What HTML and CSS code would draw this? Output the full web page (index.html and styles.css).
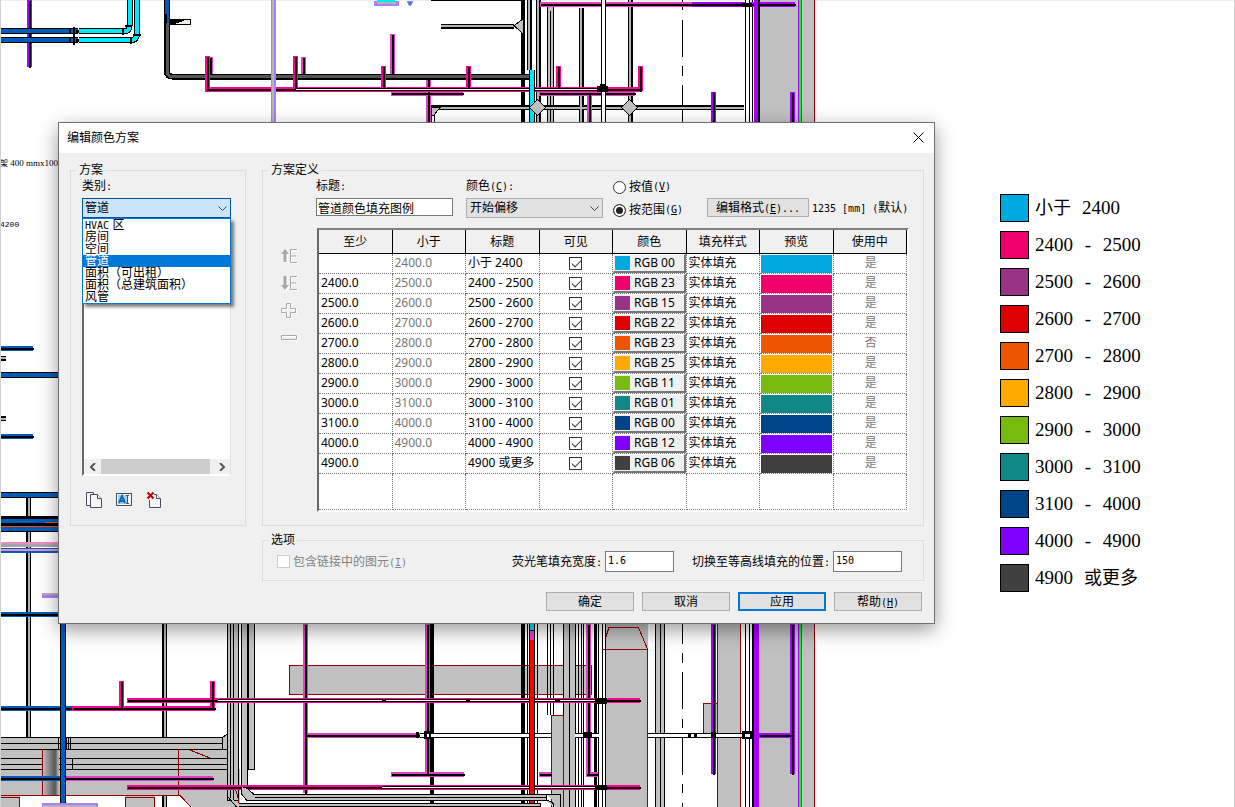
FILE: index.html
```html
<!DOCTYPE html>
<html lang="zh-CN">
<head>
<meta charset="utf-8">
<title>编辑颜色方案</title>
<link rel="stylesheet" href="styles.css">
</head>
<body>
<main class="canvas">
<svg class="drawing" viewBox="0 0 1235 807" width="1235" height="807" aria-hidden="true">
  <defs>
    <linearGradient id="round" x1="0" x2="1" y1="0" y2="0"><stop offset="0" stop-color="#bbb"/><stop offset=".75" stop-color="#555"/><stop offset="1" stop-color="#bbb"/></linearGradient>
    <path id="blueThick" d="M0 31H78M0 40H78M167 0V23M0 374.500H58M0 495H58M63 624V804"/>
    <path id="cyan" d="M79 31H125Q129.500 31 129.500 26V0M79 40H131Q137 40 137 34V0"/>
    <path id="gray" d="M167 23V71Q167 76.500 172 76.500H530"/>
    <path id="blueThin" d="M0 348.500H33M0 436.500H33M0 614.500H58M0 708.500H72M0 778.500H66"/>
    <path id="magenta" d="M207.500 56V89.500H640M295.500 56V89M383.500 66V88M468.500 66V88M558.500 66V88M640.500 66V91M121.500 681V708M212.500 681V708M72 708.500H215M127 700.500H640M127 787.500H640"/>
    <path id="pink" d="M210.500 57V74M303.500 57V74M392.500 34V74M391 93.500H463M539 93.500H635M428.500 79V123M589.500 93V123M540 4.500H692M305.500 624V793M306 735.500H420M391 774.500H464M539 774.500H551M586 774.500H600M66 778.500H213M427.500 624V774M588.500 624V774"/>
    <path id="violet" d="M29.500 0V67M692 4.500H795M713.500 92V123M792.500 92V123M713.500 624V774M792.500 624V774M759 735.500H793"/>
    <path id="tubeFine" d="M296 89H602M218 700.500H598M382 787.500H600"/>
    <path id="tubeWhite" d="M603.500 0V123M747.500 0V123M648 735.500H745M420 735.500H551M575 735.500H600M747.500 624V807M600.500 624V807"/>
    <path id="tubeGray" d="M581 8V123M630 0V123M28.500 498V737M164.500 624V737M164.500 796V807M431 107.500H744M441 26H514M0 358H6M0 418.500H6M538 0V123M529 0V70"/>
  </defs>

  <!-- structural members -->
  <path class="steel" d="M759 0H814V123H759ZM759 624H814V807H759ZM605 624H648V807H605ZM717 624H741V807H717ZM703 703H717V735H703ZM0 749H229L240 770V807H190L180 795H0ZM0 795H20V807H0ZM125 796H155V807H125Z"/>
  <path class="steel lined" d="M547.500 7V130H553.500V7M550.500 11V130M227.500 620V800H238.500V620M230.500 620V800M233.500 620V800M241.500 620V787H247.500V620M248.500 620V769.500H254.500V620M655.500 620V810H664.500V620M660.500 620V810"/>
  <path class="steel lined" d="M-1 737.500H222.500V749.500H-1M-1 743.500H222.500M222.500 737.500L227 734V749.500H222.500M-1 758.500H227M-1 769.500H227M-1 764.500H227M58.500 737V749M66.500 737V749M68.500 737V749M70.500 737V749M72.500 758V769"/>
  <rect class="round" x="43" y="750" width="16" height="46"/>
  <path class="rim" d="M42.500 749V796M60.500 749V796M178.500 749V795M0 795.500H180L191 807M190 750L210 758M19.500 797V807M125.500 807V797H154.500V807M0 797.500H19M235 789Q240 798 238 807"/>
  <path class="steel rimmed" d="M289.500 665.500H591V694.500H289.500Z"/>
  <path class="steel lined" d="M563.500 620V810H575.500V620M569.500 620V810M578.500 620V810M581.500 620V810M583.500 620V810M547.500 620V715M550.500 620V715M553.500 620V715"/>
  <path class="steel rimmed" d="M551.500 715.500H563V807H551.500ZM703.500 735V703.500H717"/>
  <path class="rim" d="M814.500 0V123M814.500 624V807M717.500 624V807M740.500 624V807M647.500 807V649.500H599M647.500 649L638.500 627.500H609L605.500 638"/>
  <path class="solid" d="M521 0H525V123H521ZM521 624H525V807H521ZM430 624H434V803H430ZM594 624H597V807H594Z"/>
  <path class="hair" d="M431 0.500H525M431.500 123V107M434.500 123V109M682.500 0V10M682.500 20V57M682.500 66V76M682.500 85V123M682.500 624V644M682.500 653V663M682.500 672V709M682.500 719V728M682.500 737V775M682.500 784V793M682.500 803V807M527.500 624V807M537.500 624V807M605.500 624V807M752.500 0V123M752.500 624V807"/>

  <!-- pipe runs -->
  <use href="#tubeGray" class="w5 black"/><use href="#tubeGray" class="w2 silver"/>
  <use href="#violet" class="w5 violet"/><use href="#violet" x=".5" y=".5" class="w2 black"/>
  <use href="#pink" class="w5 pink"/><use href="#pink" x=".5" y=".5" class="w2 black"/>
  <use href="#blueThin" class="w5 blue"/><use href="#blueThin" x=".5" y=".5" class="w2 black"/>
  <use href="#gray" class="w6 black"/><use href="#gray" class="w3 slate"/>
  <use href="#magenta" class="w5 magenta"/><use href="#magenta" x=".5" y=".5" class="w2 black"/>
  <use href="#tubeFine" class="w3 black"/><use href="#tubeFine" class="w1 white"/>
  <use href="#tubeWhite" class="w5 black"/><use href="#tubeWhite" class="w3 white"/>
  <use href="#cyan" class="w6 black"/><use href="#cyan" class="w4 cyan"/>

  <path class="w5 steelblue" d="M0 544.500H58"/><path class="w5 blue" d="M0 550.500H58"/><path class="w2 rose" d="M0 550H58M0 543H58"/>
  <path class="w16 black" d="M0 524H58"/><path class="w12 orange" d="M0 525H58"/><path class="w4 blue" d="M0 521H58M0 529H58"/><path class="w3 black" d="M0 524.500H58"/><path class="w1 orange" d="M45 522.500H58"/>
  <use href="#blueThick" class="w6 black"/><use href="#blueThick" class="w4 blue"/>

  <path class="w5 lavender" d="M273.500 0V123M42 595H58M42 805.500H98M374 3H399"/><path class="w2 silver" d="M273 0V123M43 594H58M43 806H96M377 3H396"/>
  <path class="w2 cyan" d="M377 1H395"/><path fill="#1e8ce6" stroke="#a582f5" d="M407 1H413L411 5H409Z"/>
  <path class="w5 violet" d="M756 0V123M756 624V807"/><path class="w2 black" d="M759 0V123M753 624V807"/>
  <path class="w4 violet" d="M800 0V123M800 624V807"/><path class="w2 green" d="M800 0V123M800 624V807"/>
  <path class="w6 black" d="M532 70V123M532 624V807"/><path class="w4 cyan" d="M532 70V123M532 624V630"/>
  <path class="w4 red" d="M532 640V807"/><path class="w4 pink" d="M532 631V640"/>
  <path class="steel lined" d="M514 25.500L523 19V34ZM529.500 107.500L537.500 99.500L545.500 107.500L537.500 115.500ZM621.500 107.500L629.500 99.500L637.500 107.500L629.500 115.500ZM431.500 107.500H440L434 115H431.500Z"/>

  <!-- pipework along the bottom edge -->
  <path class="steel lined" d="M241.500 787V794L247 800.500H546V794.500H254L248 789M255 797.500H546M228 797L239 810H540V803.500H239M239 806.500H540M546.500 794.500H560.500V807M546 800.500Q554 801 554 807"/>

  <!-- joints -->
  <path class="hair" fill="#f0f0e8" d="M170.500 19.500H190.500V24.500H170.500Z"/><path class="solid" d="M170 19H188L178 23L170 25Z"/>
  <path class="solid" d="M73 27H75V45H73ZM125 25H132V27H125ZM133 34H141V36H133ZM122 28H124V35H122ZM130 37H132V44H130ZM69 29H71V33H69ZM76 30H79V33H76ZM69 38H71V42H69ZM76 39H79V42H76ZM164 14H167V23H164ZM597 86H608V92H597ZM600 84H606V89H600ZM742 3H752V7H742ZM424 731H431V739H424ZM595 698H607V704H595ZM595 785H607V790H595ZM583 732H592V738H583ZM711 732H716V738H711ZM688 733H697V737H688ZM742 731H752V739H742ZM416 732H419V738H416ZM382 699H386V702H382ZM466 699H470V702H466ZM555 699H560V702H555Z"/>
  <path class="w3 white" d="M745 735.500H750M427 735.500H429M691 735.500H694"/>
</svg>

<p class="note note-tray"><span lang="zh">架</span> 400 mmx100</p>
<p class="note note-level">4200</p>

<ul class="legend">
  <li><i class="c1"></i><span><span class="cjk">小于</span><span class="num">2400</span></span></li>
  <li><i class="c2"></i><span>2400 <span class="dash">-</span> 2500</span></li>
  <li><i class="c3"></i><span>2500 <span class="dash">-</span> 2600</span></li>
  <li><i class="c4"></i><span>2600 <span class="dash">-</span> 2700</span></li>
  <li><i class="c5"></i><span>2700 <span class="dash">-</span> 2800</span></li>
  <li><i class="c6"></i><span>2800 <span class="dash">-</span> 2900</span></li>
  <li><i class="c7"></i><span>2900 <span class="dash">-</span> 3000</span></li>
  <li><i class="c8"></i><span>3000 <span class="dash">-</span> 3100</span></li>
  <li><i class="c9"></i><span>3100 <span class="dash">-</span> 4000</span></li>
  <li><i class="c10"></i><span>4000 <span class="dash">-</span> 4900</span></li>
  <li><i class="c11"></i><span>4900<span class="cjk after">或更多</span></span></li>
</ul>

<section class="dialog" role="dialog" aria-labelledby="dialog-title">
  <header class="titlebar">
    <h1 id="dialog-title">编辑颜色方案</h1>
    <button class="close" type="button" aria-label="关闭"><svg width="11" height="11" viewBox="0 0 11 11"><path d="M.5.500l10 10M10.500.500l-10 10"/></svg></button>
  </header>
  <form class="body">
    <fieldset class="scheme">
      <legend>方案</legend>
      <label for="category">类别<span class="mono">:</span></label>
      <div class="picker">
        <select id="category" class="open"><option>管道</option></select>
        <svg class="caret" width="9" height="6" viewBox="0 0 9 6"><path d="M.5.500l4 4 4-4"/></svg>
        <ul class="menu" role="listbox" aria-label="类别">
          <li role="option"><span class="mono">HVAC</span> 区</li>
          <li role="option">房间</li>
          <li role="option">空间</li>
          <li role="option" aria-selected="true">管道</li>
          <li role="option">面积（可出租）</li>
          <li role="option">面积（总建筑面积）</li>
          <li role="option">风管</li>
        </ul>
      </div>
      <div class="tree">
        <div class="hscroll">
          <button type="button" aria-label="向左"><svg width="6" height="8" viewBox="0 0 6 8"><path d="M5 0L1 4l4 4"/></svg></button>
          <div class="thumb"></div>
          <button type="button" aria-label="向右"><svg width="6" height="8" viewBox="0 0 6 8"><path d="M1 0l4 4-4 4"/></svg></button>
        </div>
      </div>
      <div class="tools">
        <button type="button" aria-label="复制"><svg width="18" height="18" viewBox="0 0 18 18"><path class="page" d="M1.500 1.500h7v2h-3v11h-4z"/><path class="page" d="M5.500 3.500h7l4 4v9h-11z"/><path class="page" d="M12.500 3.500v4h4"/></svg></button>
        <button type="button" aria-label="重命名"><svg width="18" height="18" viewBox="0 0 18 18"><rect class="page" x="1.500" y="2.500" width="15" height="12"/><path fill="#9bd0f0" d="M3 4h9v9H3z"/><path class="letter" d="M4 12l3-7 3 7M5 10h4"/><path class="page" d="M11 4.500h3M11 12.500h3M12.500 4v9"/></svg></button>
        <button type="button" aria-label="删除"><svg width="18" height="18" viewBox="0 0 18 18"><path class="page" d="M4.500 3.500h7l4 4v9h-11z"/><path class="page" d="M11.500 3.500v4h4"/><path fill="#f0f0f0" d="M1 1h8v8H1z"/><path class="cross" d="M2.500 1.500l6 6M8.500 1.500l-6 6"/></svg></button>
      </div>
    </fieldset>

    <fieldset class="definition">
      <legend>方案定义</legend>
      <div class="controls">
        <div class="field"><label for="title">标题<span class="mono">:</span></label><input id="title" type="text" value="管道颜色填充图例"></div>
        <div class="field"><label for="colour">颜色<span class="mono">(<u>C</u>):</span></label>
          <div class="picker"><select id="colour"><option>开始偏移</option></select><svg class="caret" width="9" height="6" viewBox="0 0 9 6"><path d="M.5.500l4 4 4-4"/></svg></div></div>
        <div class="radios">
          <label><input type="radio" name="by">按值<span class="mono">(<u>V</u>)</span></label>
          <label><input type="radio" name="by" checked>按范围<span class="mono">(<u>G</u>)</span></label>
        </div>
        <div class="format"><button class="btn" type="button">编辑格式<span class="mono">(<u>E</u>)...</span></button><span><span class="mono">1235 [mm] (</span>默认<span class="mono">)</span></span></div>
      </div>
      <div class="grid-area">
        <div class="order">
          <button type="button" aria-label="上移"><svg width="18" height="18" viewBox="0 0 18 18"><path class="fat" d="M5 15V5"/><path class="head" d="M5 2l4 5H1z"/><path d="M17 2.500h-6.500v13H17M10.500 9H16"/></svg></button>
          <button type="button" aria-label="下移"><svg width="18" height="18" viewBox="0 0 18 18"><path class="fat" d="M5 2v10"/><path class="head" d="M5 16l4-5H1z"/><path d="M17 2.500h-6.500v13H17M10.500 9H16"/></svg></button>
          <button type="button" aria-label="添加"><svg width="18" height="18" viewBox="0 0 18 18"><path d="M6.500 2.500h4v5h5v4h-5v5h-4v-5h-5v-4h5z"/></svg></button>
          <button type="button" aria-label="删除行"><svg width="18" height="18" viewBox="0 0 18 18"><path d="M1.500 7.500h15v4h-15z"/></svg></button>
        </div>
        <div class="table-frame">
        <table>
          <thead><tr><th>至少</th><th>小于</th><th>标题</th><th>可见</th><th>颜色</th><th>填充样式</th><th>预览</th><th>使用中</th></tr></thead>
          <tbody>
            <tr><td></td><td>2400.0</td><td>小于 2400</td><td><input type="checkbox" checked aria-label="可见"></td><td><button type="button"><i class="c1"></i>RGB 00</button></td><td>实体填充</td><td><i class="c1"></i></td><td>是</td></tr>
            <tr><td>2400.0</td><td>2500.0</td><td>2400 - 2500</td><td><input type="checkbox" checked aria-label="可见"></td><td><button type="button"><i class="c2"></i>RGB 23</button></td><td>实体填充</td><td><i class="c2"></i></td><td>是</td></tr>
            <tr><td>2500.0</td><td>2600.0</td><td>2500 - 2600</td><td><input type="checkbox" checked aria-label="可见"></td><td><button type="button"><i class="c3"></i>RGB 15</button></td><td>实体填充</td><td><i class="c3"></i></td><td>是</td></tr>
            <tr><td>2600.0</td><td>2700.0</td><td>2600 - 2700</td><td><input type="checkbox" checked aria-label="可见"></td><td><button type="button"><i class="c4"></i>RGB 22</button></td><td>实体填充</td><td><i class="c4"></i></td><td>是</td></tr>
            <tr><td>2700.0</td><td>2800.0</td><td>2700 - 2800</td><td><input type="checkbox" checked aria-label="可见"></td><td><button type="button"><i class="c5"></i>RGB 23</button></td><td>实体填充</td><td><i class="c5"></i></td><td>否</td></tr>
            <tr><td>2800.0</td><td>2900.0</td><td>2800 - 2900</td><td><input type="checkbox" checked aria-label="可见"></td><td><button type="button"><i class="c6"></i>RGB 25</button></td><td>实体填充</td><td><i class="c6"></i></td><td>是</td></tr>
            <tr><td>2900.0</td><td>3000.0</td><td>2900 - 3000</td><td><input type="checkbox" checked aria-label="可见"></td><td><button type="button"><i class="c7"></i>RGB 11</button></td><td>实体填充</td><td><i class="c7"></i></td><td>是</td></tr>
            <tr><td>3000.0</td><td>3100.0</td><td>3000 - 3100</td><td><input type="checkbox" checked aria-label="可见"></td><td><button type="button"><i class="c8"></i>RGB 01</button></td><td>实体填充</td><td><i class="c8"></i></td><td>是</td></tr>
            <tr><td>3100.0</td><td>4000.0</td><td>3100 - 4000</td><td><input type="checkbox" checked aria-label="可见"></td><td><button type="button"><i class="c9"></i>RGB 00</button></td><td>实体填充</td><td><i class="c9"></i></td><td>是</td></tr>
            <tr><td>4000.0</td><td>4900.0</td><td>4000 - 4900</td><td><input type="checkbox" checked aria-label="可见"></td><td><button type="button"><i class="c10"></i>RGB 12</button></td><td>实体填充</td><td><i class="c10"></i></td><td>是</td></tr>
            <tr><td>4900.0</td><td></td><td>4900 或更多</td><td><input type="checkbox" checked aria-label="可见"></td><td><button type="button"><i class="c11"></i>RGB 06</button></td><td>实体填充</td><td><i class="c11"></i></td><td>是</td></tr>
            <tr class="blank"><td></td><td></td><td></td><td></td><td></td><td></td><td></td><td></td></tr>
          </tbody>
        </table>
        </div>
      </div>
    </fieldset>

    <fieldset class="options">
      <legend>选项</legend>
      <div class="option-row">
        <label class="linked"><input type="checkbox" disabled><span>包含链接中的图元<span class="mono">(<u>I</u>)</span></span></label>
        <label for="width">荧光笔填充宽度<span class="mono">:</span></label><input id="width" type="text" value="1.6">
        <label class="second" for="contour">切换至等高线填充的位置<span class="mono">:</span></label><input id="contour" type="text" value="150">
      </div>
    </fieldset>

    <div class="actions">
      <button class="btn" type="button">确定</button>
      <button class="btn" type="button">取消</button>
      <button class="btn primary" type="button">应用</button>
      <button class="btn" type="button">帮助<span class="mono">(<u>H</u>)</span></button>
    </div>
  </form>
</section>
</main>
</body>
</html>
```
FILE: styles.css
```css
* { box-sizing: border-box; }
body { margin: 0; background: #fff; color: #000; font: 12px/14px "Liberation Sans", "Noto Sans CJK SC", sans-serif; }
ul, p, h1 { margin: 0; padding: 0; list-style: none; }
button, input, select { font: inherit; color: inherit; margin: 0; padding: 0; }
button { border: 0; background: none; }
i { display: block; }
.mono { font-family: "DejaVu Sans Mono", monospace; font-size: 10px; line-height: 12px; }

.canvas { position: relative; min-height: 100vh; overflow: hidden; border: solid #d0d0d0; border-width: 0 1px 0 1px; box-shadow: inset 0 1px #eee; }

/* drawing */
.drawing { position: absolute; left: -1px; top: 0; shape-rendering: crispEdges; fill: none; }
.steel { fill: #c0c0c0; }
.lined { stroke: #000; }
.rim { stroke: #960000; }
.rimmed { stroke: #960000; }
.round { fill: url(#round); }
.solid { fill: #000; }
.hair { stroke: #000; }
.w1 { stroke-width: 1; } .w2 { stroke-width: 2; } .w3 { stroke-width: 3; } .w4 { stroke-width: 4; }
.w5 { stroke-width: 5; } .w6 { stroke-width: 6; } .w12 { stroke-width: 12; } .w16 { stroke-width: 16; }
.black { stroke: #000; } .white { stroke: #fff; } .silver { stroke: #b4b4b4; }
.blue { stroke: #005cb9; } .steelblue { stroke: #a5a5ad; } .cyan { stroke: #00eaff; }
.slate { stroke: #555; } .magenta { stroke: #ff0090; } .pink { stroke: #e340c6; }
.violet { stroke: #a800ff; } .lavender { stroke: #a582f5; } .rose { stroke: #f08cc0; }
.orange { stroke: #ff4800; } .red { stroke: #f00; } .green { stroke: #0f0; }

.note { position: absolute; left: -1px; white-space: nowrap; }
.note-tray { top: 158px; font: 9px/10px "Liberation Serif", "Noto Sans CJK SC", serif; }
.note-tray span { font-size: 8px; }
.note-level { top: 220px; font: 8px/10px "Liberation Mono", monospace; }

.legend { position: absolute; left: 999px; top: 194px; display: grid; gap: 9px; font: 19px/28px "Liberation Serif", "Noto Sans CJK SC", serif; }
.legend li { display: flex; gap: 6px; height: 28px; white-space: nowrap; }
.legend i { width: 29px; height: 28px; border: 1px solid #000; }
.legend .dash { padding: 0 7px; }
.legend .cjk { font-size: 18px; }
.legend .num, .legend .after { margin-left: 11px; }

.c1 { background: #00a9e0; } .c2 { background: #f0006b; } .c3 { background: #993388; }
.c4 { background: #dd0000; } .c5 { background: #ee5500; } .c6 { background: #ffaa00; }
.c7 { background: #77bb11; } .c8 { background: #118888; } .c9 { background: #004488; }
.c10 { background: #8000ff; } .c11 { background: #404040; }

/* dialog */
.dialog { position: absolute; left: 57px; top: 122px; width: 877px; border: 1px solid #707070; background: #f0f0f0; box-shadow: 0 6px 18px rgba(0, 0, 0, .4); }
.titlebar { display: flex; align-items: center; justify-content: space-between; height: 30px; padding: 0 9px 0 8px; background: #fff; }
.titlebar h1 { font-size: 12px; font-weight: 400; }
.close { display: flex; padding: 0 1px 2px; }
.close svg { fill: none; stroke: #000; }
.body { display: grid; grid-template-columns: 176px 1fr; column-gap: 16px; row-gap: 7px; padding: 10px 10px 12px 11px; }
fieldset { min-width: 0; margin: 0; padding: 0; border: 1px solid #dcdcdc; }
legend { margin-left: 6px; padding: 0 2px; line-height: 14px; }
label { white-space: nowrap; }

.scheme { display: flex; flex-direction: column; height: 363px; }
.scheme > label { height: 21px; padding: 2px 0 0 11px; }
.scheme .picker { margin: 0 14px 0 11px; }
.picker { position: relative; }
select { display: block; width: 100%; height: 20px; padding: 0 3px; border: 1px solid #adadad; border-radius: 0; background: #e1e1e1; appearance: none; }
select.open { border-color: #005499; background: #cce4f7; padding: 0 2px; }
.caret { position: absolute; right: 4px; top: 8px; fill: none; stroke: #444; }
.menu { position: absolute; z-index: 1; left: 0; right: 0; top: 20px; border: 1px solid #0078d7; background: #fff; box-shadow: 3px 3px 3px rgba(0, 0, 0, .5); }
.menu li { height: 12px; padding-left: 2px; line-height: 12px; white-space: nowrap; }
.menu [aria-selected] { background: #0078d7; color: #fff; }
.tree { display: flex; flex-direction: column; justify-content: flex-end; height: 258px; margin: 0 14px 0 11px; border: 2px solid; border-color: #a0a0a0 #e3e3e3 #fff #696969; border-right-width: 1px; background: #fff; }
.hscroll { display: flex; height: 15px; background: #f0f0f0; }
.hscroll button { display: flex; align-items: center; justify-content: center; width: 17px; }
.hscroll svg { fill: none; stroke: #555; stroke-width: 2; }
.hscroll .thumb { flex: 1; margin-right: 3px; background: #cdcdcd; }
.tools { display: flex; gap: 12px; padding: 15px 0 0 14px; }
.tools button, .tools svg { display: block; }
.page { fill: #f5f5f8; stroke: #4a4e5c; }
.letter { fill: none; stroke: #1464b4; stroke-width: 2; }
.cross { stroke: #c00000; stroke-width: 2; }

.definition { height: 363px; }
.controls { display: flex; align-items: flex-start; height: 41px; padding-left: 53px; }
.field { width: 137px; margin-right: 13px; }
.field > label { display: block; height: 21px; padding-top: 2px; }
input[type="text"] { display: block; border: 1px solid #7a7a7a; background: #fff; }
#title { width: 100%; height: 18px; padding: 0 1px; }
.radios { display: flex; flex: none; flex-direction: column; gap: 9px; width: 94px; margin-left: -3px; padding-top: 3px; }
.radios label { display: flex; align-items: center; height: 14px; }
.radios input { width: 13px; height: 13px; margin-right: 3px; border: 1px solid #333; border-radius: 50%; background: #fff; appearance: none; }
.radios input:checked { background: #222; box-shadow: inset 0 0 0 2px #fff; }
.format { display: flex; align-items: center; gap: 3px; padding-top: 21px; white-space: nowrap; }
.btn { height: 19px; border: 1px solid #adadad; background: #e1e1e1; text-align: center; }
.format .btn { width: 102px; }
.grid-area { display: grid; grid-template-columns: 54px 1fr; padding: 10px 14px 0 0; }
.order { display: flex; flex-direction: column; gap: 9px; padding: 19px 0 0 17px; }
.order button, .order svg { display: block; width: 18px; height: 18px; }
.order svg { fill: none; stroke: #a8a8a8; filter: drop-shadow(1px 1px #fff); }
.order .fat { stroke-width: 3; }
.order .head { fill: #a8a8a8; stroke: none; }
.table-frame { border: 2px solid; border-color: #808080 #fff #fff #696969; background: #fff; }
table { width: 100%; border-collapse: separate; border-spacing: 0; table-layout: fixed; font-family: "Noto Sans", "Noto Sans CJK SC", sans-serif; }
th { height: 24px; padding: 0; border: solid #000; border-width: 0 1px 1px 0; background: #f0f0f0; font-weight: 400; line-height: 14px; }
td { height: 20px; padding: 0 0 2px 2px; border: dotted #777; border-width: 0 1px 1px 0; line-height: 16px; white-space: nowrap; }
td:nth-child(2), td:nth-child(8) { color: #787878; }
td:nth-child(4) { padding: 2px 0 0; text-align: center; }
td:nth-child(5) { padding: 0; }
td:nth-child(7) { padding: 1px 1px 0; }
td:nth-child(8) { text-align: center; }
td > i { height: 18px; }
td button { display: flex; align-items: center; gap: 4px; width: 100%; height: 19px; padding-left: 1px; border: solid; border-color: #fff #777 #777 #fff; border-width: 1px 2px 2px 1px; background: #f0f0f0; line-height: 14px; }
td button i { width: 15px; height: 14px; }
.blank td { height: 36px; }
input[type="checkbox"] { display: inline-block; width: 13px; height: 13px; border: 1px solid #333; background: #fff; appearance: none; vertical-align: top; }
td input:checked::before { content: ""; display: block; width: 8px; height: 4px; margin: 2px 0 0 2px; border: solid #333; border-width: 0 0 1px 1px; transform: rotate(-45deg); }

.options { grid-column: 2; height: 48px; }
.option-row { display: flex; align-items: center; padding: 4px 21px 0 14px; }
.option-row input[type="text"] { width: 69px; height: 21px; padding: 0 2px 2px; font: 10px "DejaVu Sans Mono", monospace; }
.option-row label { margin-right: 3px; }
.option-row .linked { display: flex; align-items: center; gap: 3px; margin-right: auto; color: #838383; }
.linked input { border-color: #ccc; }
.option-row .second { margin-left: 18px; }
.actions { grid-column: 2; display: flex; justify-content: flex-end; gap: 8px; padding: 4px 2px 0 0; }
.actions .btn { width: 88px; }
.primary { border: 2px solid #0078d7; }
```
